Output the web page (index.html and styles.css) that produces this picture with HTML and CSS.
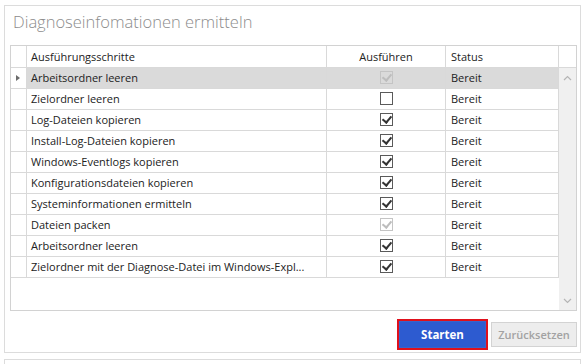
FILE: index.html
```html
<!DOCTYPE html>
<html lang="de">
<head>
    <meta charset="UTF-8">
    <title>Diagnoseinfomationen ermitteln</title>
    <link rel="stylesheet" href="styles.css">
</head>
<body>
    <div class="panel">
        <h1 class="title">Diagnoseinfomationen ermitteln</h1>

        <div class="grid">
            <div class="grid-body">
                <div class="row head">
                    <div class="cell rh"></div>
                    <div class="cell name">Ausführungsschritte</div>
                    <div class="cell run">Ausführen</div>
                    <div class="cell status">Status</div>
                </div>
                <div class="row selected">
                    <div class="cell rh"><span class="arrow"></span></div>
                    <div class="cell name">Arbeitsordner leeren</div>
                    <div class="cell run"><span class="check on disabled"></span></div>
                    <div class="cell status">Bereit</div>
                </div>
                <div class="row">
                    <div class="cell rh"></div>
                    <div class="cell name">Zielordner leeren</div>
                    <div class="cell run"><span class="check"></span></div>
                    <div class="cell status">Bereit</div>
                </div>
                <div class="row">
                    <div class="cell rh"></div>
                    <div class="cell name">Log-Dateien kopieren</div>
                    <div class="cell run"><span class="check on"></span></div>
                    <div class="cell status">Bereit</div>
                </div>
                <div class="row">
                    <div class="cell rh"></div>
                    <div class="cell name">Install-Log-Dateien kopieren</div>
                    <div class="cell run"><span class="check on"></span></div>
                    <div class="cell status">Bereit</div>
                </div>
                <div class="row">
                    <div class="cell rh"></div>
                    <div class="cell name">Windows-Eventlogs kopieren</div>
                    <div class="cell run"><span class="check on"></span></div>
                    <div class="cell status">Bereit</div>
                </div>
                <div class="row">
                    <div class="cell rh"></div>
                    <div class="cell name">Konfigurationsdateien kopieren</div>
                    <div class="cell run"><span class="check on"></span></div>
                    <div class="cell status">Bereit</div>
                </div>
                <div class="row">
                    <div class="cell rh"></div>
                    <div class="cell name">Systeminformationen ermitteln</div>
                    <div class="cell run"><span class="check on"></span></div>
                    <div class="cell status">Bereit</div>
                </div>
                <div class="row">
                    <div class="cell rh"></div>
                    <div class="cell name">Dateien packen</div>
                    <div class="cell run"><span class="check on disabled"></span></div>
                    <div class="cell status">Bereit</div>
                </div>
                <div class="row">
                    <div class="cell rh"></div>
                    <div class="cell name">Arbeitsordner leeren</div>
                    <div class="cell run"><span class="check on"></span></div>
                    <div class="cell status">Bereit</div>
                </div>
                <div class="row">
                    <div class="cell rh"></div>
                    <div class="cell name">Zielordner mit der Diagnose-Datei im Windows-Expl...</div>
                    <div class="cell run"><span class="check on"></span></div>
                    <div class="cell status">Bereit</div>
                </div>
            </div>
            <div class="scroll">
                <div class="scroll-head"></div>
                <div class="scroll-track">
                    <svg class="chev" width="9" height="6" viewBox="0 0 9 6"><path d="M1 5 L4.5 1.5 L8 5" fill="none" stroke="#b5b5b5" stroke-width="1.2"/></svg>
                    <svg class="chev" width="9" height="6" viewBox="0 0 9 6"><path d="M1 1 L4.5 4.5 L8 1" fill="none" stroke="#b5b5b5" stroke-width="1.2"/></svg>
                </div>
            </div>
        </div>

        <div class="actions">
            <button class="btn btn-start">Starten</button>
            <button class="btn btn-reset" disabled>Zurücksetzen</button>
        </div>
    </div>

    <div class="panel panel-next"></div>
</body>
</html>
```

FILE: styles.css
```css
* {
    margin: 0;
    padding: 0;
    box-sizing: border-box;
    font-family: 'Open Sans', 'Noto Sans', sans-serif;
}

body {
    background-color: #fff;
    color: #222;
    font-size: 11px;
    overflow: hidden;
}

.panel {
    margin: 5px 2px 0 4px;
    height: 348px;
    border: 1px solid #dcdcdc;
    padding: 0 3px 0 5px;
}

.panel-next {
    margin-top: 6px;
    height: 5px;
    border-bottom: none;
}

.title {
    font-size: 16.5px;
    font-weight: 300;
    color: #8c8c8c;
    line-height: 24px;
    margin-top: 4px;
    margin-bottom: 11px;
    padding-left: 3px;
}

/* data grid */
.grid {
    display: flex;
    width: 567px;
    height: 266px;
    border: 1px solid #d2d2d2;
}

.grid-body {
    width: 548px;
}

.row {
    display: grid;
    grid-template-columns: 16px 300px 119px 113px;
    height: 21px;
}

.row.head {
    height: 22px;
}

.cell {
    border-right: 1px solid #d9d9d9;
    border-bottom: 1px solid #d9d9d9;
    line-height: 20px;
    white-space: nowrap;
    overflow: hidden;
}

.cell.name {
    padding-left: 4px;
}

.cell.run {
    text-align: center;
}

.cell.status {
    padding-left: 5px;
}

.row.head .cell {
    line-height: 21px;
}

.row.selected .cell:not(.rh) {
    background-color: #dadada;
}

.arrow {
    display: block;
    width: 0;
    height: 0;
    margin: 7px 0 0 5px;
    border-left: 4px solid #6b6b6b;
    border-top: 3.5px solid transparent;
    border-bottom: 3.5px solid transparent;
}

.check {
    display: inline-block;
    width: 13px;
    height: 13px;
    margin-top: 3px;
    vertical-align: top;
    border: 1px solid #5a5a5a;
    background-color: #fff;
    position: relative;
}

.check.on::after {
    content: '';
    position: absolute;
    left: 3px;
    top: 0;
    width: 4px;
    height: 7px;
    border-right: 2px solid #333;
    border-bottom: 2px solid #333;
    transform: rotate(40deg);
}

.check.disabled {
    border-color: #c4c4c4;
    background-color: transparent;
}

.check.disabled::after {
    border-color: #bdbdbd;
}

/* scrollbar */
.scroll {
    width: 17px;
    display: flex;
    flex-direction: column;
}

.scroll-head {
    height: 22px;
    border-bottom: 1px solid #d9d9d9;
}

.scroll-track {
    flex: 1;
    background-color: #f0f0f0;
    display: flex;
    flex-direction: column;
    justify-content: space-between;
    align-items: center;
    padding: 7px 0 6px;
}

/* buttons */
.actions {
    display: flex;
    justify-content: flex-end;
    align-items: center;
    gap: 3px;
    margin-top: 8px;
    width: 567px;
}

.btn {
    font-size: 11.5px;
    font-weight: 700;
    border-radius: 0;
    padding: 0;
}

.btn-start {
    width: 91px;
    height: 31px;
    color: #fff;
    background-color: #2d5bd0;
    border: 2px solid #e0101c;
    box-shadow: inset 0 0 0 1px #3a63c9;
}

.btn-reset {
    width: 86px;
    height: 25px;
    font-size: 11px;
    font-weight: 600;
    color: #a2a2a2;
    background-color: #ededed;
    border: 1px solid #d3d3d3;
}
```
